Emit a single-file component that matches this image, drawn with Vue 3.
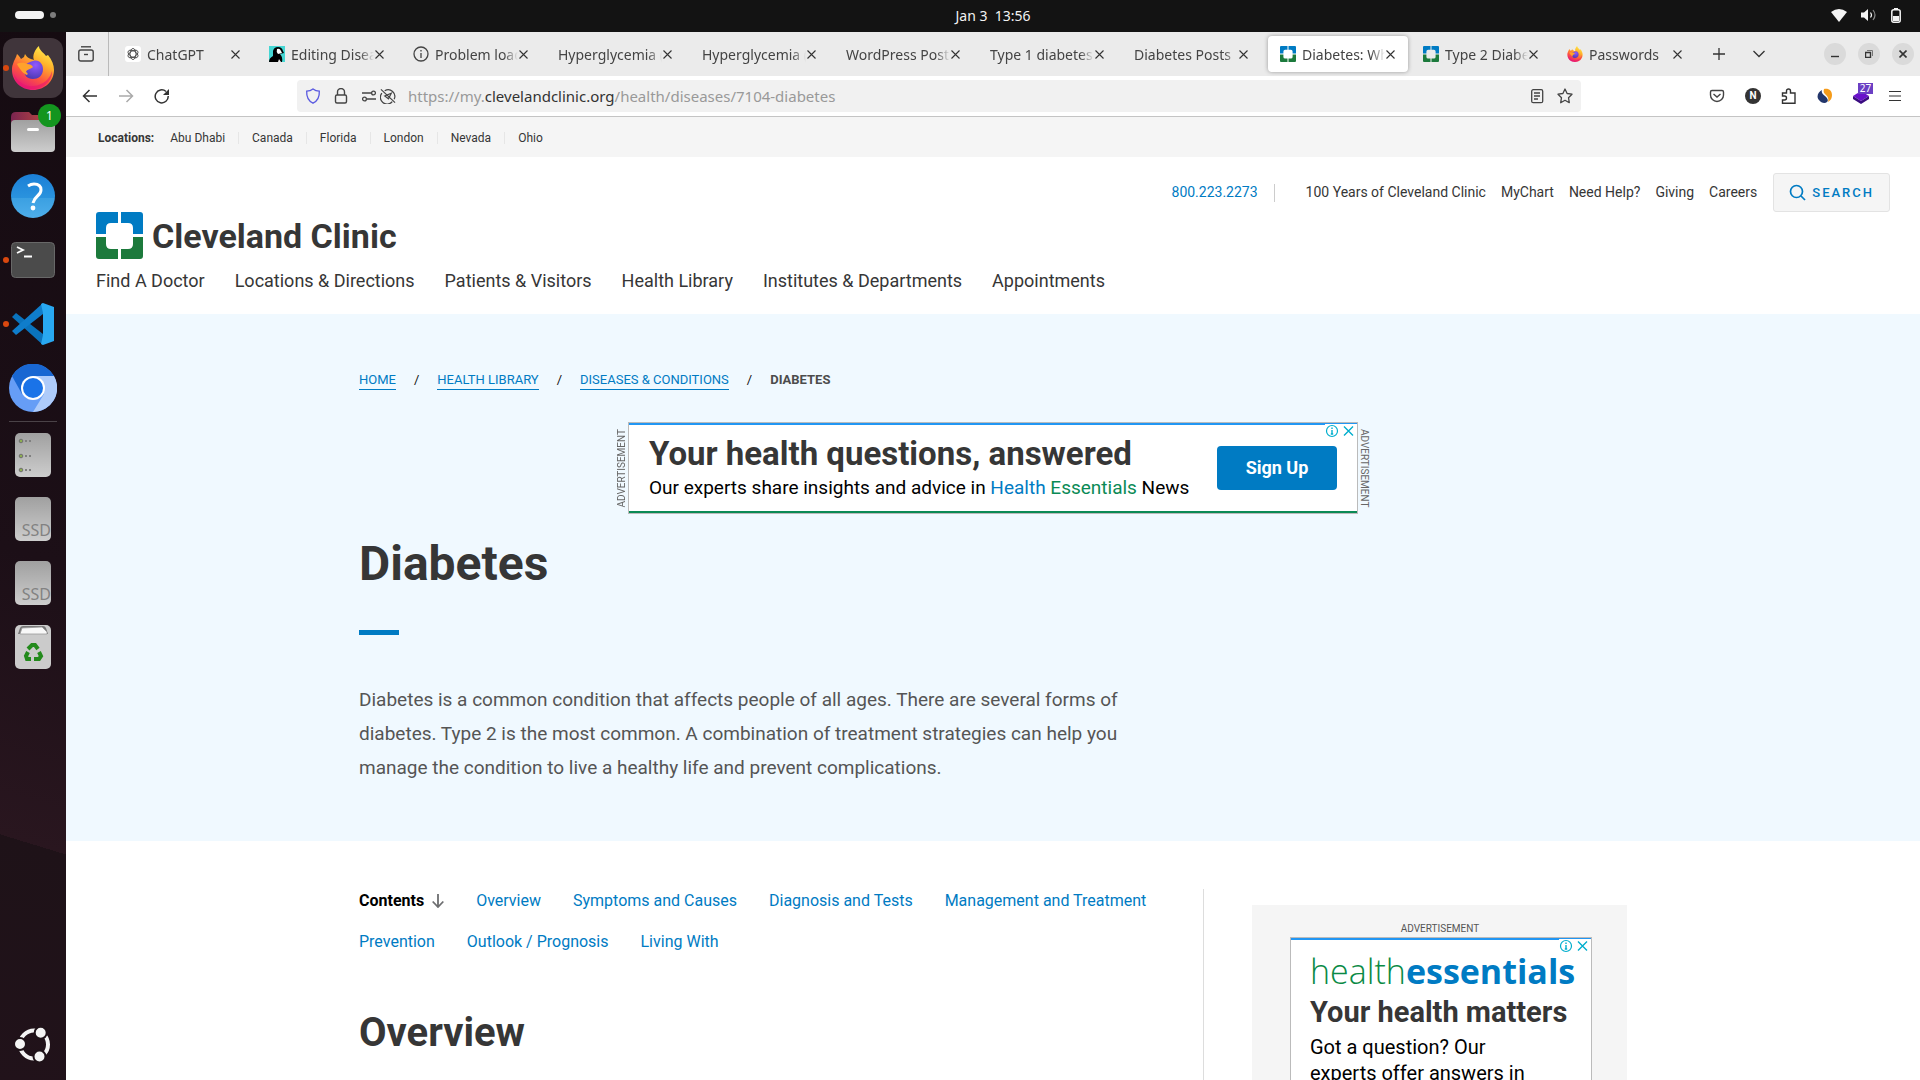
<script setup>
const tabs = [
  { title: 'ChatGPT', icon: 'gpt' },
  { title: 'Editing Disea', icon: 'bird' },
  { title: 'Problem load', icon: 'info' },
  { title: 'Hyperglycemia (' },
  { title: 'Hyperglycemia (' },
  { title: 'WordPress Post' },
  { title: 'Type 1 diabetes' },
  { title: 'Diabetes Posts' },
  { title: 'Diabetes: Wh', icon: 'clinic', active: true },
  { title: 'Type 2 Diabe', icon: 'clinic' },
  { title: 'Passwords', icon: 'fox' },
]
const locations = ['Abu Dhabi', 'Canada', 'Florida', 'London', 'Nevada', 'Ohio']
const utility = ['100 Years of Cleveland Clinic', 'MyChart', 'Need Help?', 'Giving', 'Careers']
const mainNav = ['Find A Doctor', 'Locations & Directions', 'Patients & Visitors', 'Health Library', 'Institutes & Departments', 'Appointments']
const crumbs = ['HOME', 'HEALTH LIBRARY', 'DISEASES & CONDITIONS']
const contents = ['Overview', 'Symptoms and Causes', 'Diagnosis and Tests', 'Management and Treatment', 'Prevention', 'Outlook / Prognosis', 'Living With']
</script>

<template>
  <div class="desktop">
    <svg width="0" height="0" class="defs" aria-hidden="true">
      <defs>
        <linearGradient id="foxBody" x1="0.8" y1="0" x2="0.3" y2="1">
          <stop offset="0" stop-color="#fff44f" />
          <stop offset="0.35" stop-color="#ffb12b" />
          <stop offset="0.65" stop-color="#ff5a3c" />
          <stop offset="1" stop-color="#e3127f" />
        </linearGradient>
        <radialGradient id="foxGlobe" cx="0.6" cy="0.25" r="0.8">
          <stop offset="0" stop-color="#9059ff" />
          <stop offset="1" stop-color="#4a38b0" />
        </radialGradient>
        <linearGradient id="metal" x1="0" y1="0" x2="0" y2="1">
          <stop offset="0" stop-color="#a0a0a0" />
          <stop offset="1" stop-color="#cdcdcd" />
        </linearGradient>
        <linearGradient id="folderBack" x1="0" y1="0" x2="1" y2="0">
          <stop offset="0" stop-color="#7b2450" />
          <stop offset="1" stop-color="#c8503c" />
        </linearGradient>
        <linearGradient id="helpBlue" x1="0" y1="0" x2="0" y2="1">
          <stop offset="0" stop-color="#1b7fd6" />
          <stop offset="0.54" stop-color="#2a93de" />
          <stop offset="0.55" stop-color="#3ba0e2" />
          <stop offset="1" stop-color="#4eaeea" />
        </linearGradient>
      </defs>
      <symbol id="fox" viewBox="0 0 42 44">
        <path d="M1 18C2 14 4 12 5 8c2 2 3 3 4 5l3-2 1-3c2 4 6 5 9 6C20 10 23 3 27 0c0 4 4 6 7 10l2-1c4 5 6 10 6 15 0 11-9 20-21 20S0 35 0 24c0-2 0-4 1-6z" fill="url(#foxBody)" />
        <path d="M2 28c4 9 12 13 20 12 9-1 16-7 18-15 1 8-7 18-19 18C10 43 3 37 2 28z" fill="#e9146f" opacity=".6" />
        <path d="M21 15c6-2 10 3 10 8 0 7-5 10-10 10-6 0-9-4-9-9s4-8 9-9z" fill="url(#foxGlobe)" />
        <path d="M5 18c4-2 8-1 10 0 3 0 5 1 6 3-2 2-6 2-7 5 2 1 2 2 1 3-3-1-7-5-10-11z" fill="#ffa22c" />
      </symbol>
      <symbol id="clinic" viewBox="0 0 47 47">
        <path d="M3 0h19v11h-7q-5 0-5 5v6H0V3q0-3 3-3zM44 0H25v11h7q5 0 5 5v6h10V3q0-3-3-3z" fill="#007bc3" />
        <path d="M3 47h19V37h-7q-5 0-5-5v-7H0v19q0 3 3 3zM44 47H25V37h7q5 0 5-5v-7h10v19q0 3-3 3z" fill="#1c7a3c" />
      </symbol>
      <symbol id="adchoice" viewBox="0 0 32 14">
        <circle cx="7" cy="7" r="5.500" fill="none" stroke="#00aecd" stroke-width="1.200" />
        <path d="M7 6v4M7 3.500v1.400M5.800 10h2.400" stroke="#00aecd" stroke-width="1.400" />
        <path d="M19 2.500l9 9M28 2.500l-9 9" stroke="#00aecd" stroke-width="1.400" />
      </symbol>
    </svg>

    <header class="panel">
      <div class="workspaces"><span class="pill"></span><span class="dot"></span></div>
      <time class="clock">Jan 3&nbsp; 13:56</time>
      <div class="status">
        <svg width="16" height="13" viewBox="0 0 16 13"><path d="M8 13L0 3Q8-3 16 3z" fill="#f4f4f4" /></svg>
        <svg width="16" height="14" viewBox="0 0 16 14"><path d="M0 4.500h3L7 1v12L3 9.500H0z" fill="#f4f4f4" /><path d="M9.500 4.500q2 2.500 0 5" stroke="#f4f4f4" stroke-width="1.200" fill="none" /><path d="M12 2q4 5 0 10" stroke="#888" stroke-width="1.200" fill="none" /></svg>
        <svg width="10" height="15" viewBox="0 0 10 15"><path d="M3 0h4v2H3z" fill="#f4f4f4" /><rect x=".8" y="1.800" width="8.400" height="12.400" rx="2" fill="none" stroke="#f4f4f4" stroke-width="1.500" /><path d="M2 8h6v5H2z" fill="#f4f4f4" /></svg>
      </div>
    </header>

    <div class="workarea">
      <nav class="dock" aria-label="Dock">
        <button class="app focused" aria-label="Firefox"><i class="run"></i><svg width="42" height="44"><use href="#fox" /></svg></button>
        <button class="app" aria-label="Files">
          <svg width="46" height="42" viewBox="0 0 46 42"><path d="M1 6q0-5 5-5h13l3 3h18q5 0 5 5v20H1z" fill="url(#folderBack)" /><rect x="1" y="9" width="44" height="32" rx="4" fill="url(#metal)" /><rect x="17" y="17" width="12" height="3" rx="1.500" fill="#fff" /></svg>
          <span class="count">1</span>
        </button>
        <button class="app" aria-label="Help"><svg width="44" height="44" viewBox="0 0 44 44"><circle cx="22" cy="22" r="22" fill="url(#helpBlue)" /><path d="M17 12q3-2 6-2 7 0 7 6 0 3-3.500 6T22 29" stroke="#fff" stroke-width="3" fill="none" /><circle cx="22" cy="34" r="2.400" fill="#fff" /></svg></button>
        <button class="app" aria-label="Terminal"><i class="run"></i><svg width="44" height="36" viewBox="0 0 44 36"><rect x=".5" y=".5" width="43" height="35" rx="4" fill="#4b4b4b" stroke="#686868" /><path d="M6 5l6 3-6 3M13 14.500h8" stroke="#fff" stroke-width="1.800" fill="none" /></svg></button>
        <button class="app" aria-label="Visual Studio Code"><i class="run"></i><svg width="42" height="42" viewBox="0 0 42 42"><path d="M0 14l4-4 27 21v11z" fill="#0a73bd" /><path d="M0 28l4 4 27-21V0z" fill="#0f7dcb" /><path d="M31 0l11 4v34l-11 4-2-1 2-9V10l-2-9z" fill="#29a8f1" /></svg></button>
        <button class="app" aria-label="Chromium"><svg width="48" height="48" viewBox="0 0 48 48"><circle cx="24" cy="24" r="24" fill="#669df6" /><path d="M3 12A24 24 0 0 1 45 12H24L13 30z" fill="#1967d2" /><path d="M24 12h21a24 24 0 0 1-21 36l11-18z" fill="#aecbfa" /><circle cx="24" cy="24" r="12" fill="#fff" /><circle cx="24" cy="24" r="10" fill="#1a73e8" /></svg></button>
        <hr />
        <button class="app" aria-label="Drive"><svg width="38" height="46" viewBox="0 0 38 46"><rect x="1" y="1" width="36" height="44" rx="5" fill="url(#metal)" /><g fill="#8dae50" stroke="#707070"><circle cx="7" cy="9" r="1.800" /><circle cx="7" cy="24" r="1.800" /><circle cx="7" cy="38" r="1.800" /></g><path d="M11 9h6M11 24h6M11 38h6" stroke="#808080" stroke-width="2" stroke-dasharray="2 2" /></svg></button>
        <button v-for="n in 2" :key="n" class="app"><span class="ssd">SSD</span></button>
        <button class="app" aria-label="Trash"><svg width="38" height="46" viewBox="0 0 38 46"><rect x="1" y="1" width="36" height="44" rx="5" fill="#cbcbcb" /><path d="M4 10l2-6q1-2 3-2h20q2 0 3 2l2 6z" fill="#777" /><path d="M6 10l2-6 20-1 5 5v2z" fill="#f8f8f8" stroke="#999" stroke-width=".8" /><g fill="none" stroke="#238a1c" stroke-width="4"><path d="M14 25l4-4h3l3 4" /><path d="M25 28l2 4-2 3h-5" /><path d="M17 35h-4l-1-3 2-4" /></g></svg></button>
        <button class="apps-button" aria-label="Show Apps"><svg width="36" height="36" viewBox="0 0 36 36"><circle cx="19" cy="17.500" r="14" fill="none" stroke="#f4f4f4" stroke-width="4" /><g fill="#f4f4f4" stroke="#1e1218" stroke-width="2"><circle cx="5" cy="17" r="6" /><circle cx="25.700" cy="5.700" r="6" /><circle cx="24.500" cy="29.500" r="6" /></g></svg></button>
      </nav>

      <section class="browser">
        <div class="tabbar">
          <button class="view" aria-label="Firefox View"><svg width="16" height="16" viewBox="0 0 16 16" fill="none" stroke="#444" stroke-width="1.400"><path d="M3 .8h10" /><rect x=".8" y="4" width="14.400" height="11" rx="2" /><path d="M6 8.500h4" /></svg></button>
          <div v-for="(t, i) in tabs" :key="i" class="tab" :class="{ active: t.active }">
            <svg v-if="t.icon === 'gpt'" width="16" height="16" viewBox="0 0 16 16"><rect width="16" height="16" rx="3" fill="#fff" /><g fill="none" stroke="#333" stroke-width=".8"><ellipse cx="8" cy="8" rx="3" ry="5.500" /><ellipse cx="8" cy="8" rx="3" ry="5.500" transform="rotate(60 8 8)" /><ellipse cx="8" cy="8" rx="3" ry="5.500" transform="rotate(120 8 8)" /></g></svg>
            <svg v-else-if="t.icon === 'bird'" width="16" height="16" viewBox="0 0 16 16"><rect width="16" height="16" fill="#45d6d3" /><path d="M4 5q1-4 5-4 4 0 5 4l1 2-4 1q3 3 2 8H0q0-4 4-6z" fill="#000" /><path d="M8 3q3-1 4 2l1 2-4 1q-2-2-1-5z" fill="#fff" /><path d="M10 13l2 3h-3z" fill="#eee" /></svg>
            <svg v-else-if="t.icon === 'info'" width="16" height="16" viewBox="0 0 16 16" stroke="#444" stroke-width="1.300" fill="none"><circle cx="8" cy="8" r="7" /><path d="M8 7v5M8 4v1.500" /></svg>
            <svg v-else-if="t.icon" width="16" height="16"><use :href="'#' + t.icon" /></svg>
            <span class="title">{{ t.title }}</span>
            <button class="close" aria-label="Close tab"><svg width="9" height="9" viewBox="0 0 9 9"><path d="M.5.5l8 8M8.500.5l-8 8" stroke="#333" stroke-width="1.100" /></svg></button>
          </div>
          <button class="tool" aria-label="New tab"><svg width="12" height="12" viewBox="0 0 12 12"><path d="M6 0v12M0 6h12" stroke="#333" stroke-width="1.300" /></svg></button>
          <button class="tool" aria-label="List all tabs"><svg width="12" height="8" viewBox="0 0 12 8"><path d="M.5 1L6 6.500 11.500 1" stroke="#333" stroke-width="1.300" fill="none" /></svg></button>
          <div class="window-controls">
            <button aria-label="Minimize"><svg width="8" height="8"><path d="M0 6.500h8" stroke="#333" stroke-width="1.400" /></svg></button>
            <button aria-label="Restore"><svg width="8" height="8" viewBox="0 0 8 8" fill="none" stroke="#333"><path d="M.5 2.500h5v5h-5z" stroke-width="1.400" /><path d="M2 .5h5.500V6" stroke="#777" /></svg></button>
            <button aria-label="Close"><svg width="8" height="8" viewBox="0 0 8 8"><path d="M.5.5l7 7M7.500.5l-7 7" stroke="#333" stroke-width="1.600" /></svg></button>
          </div>
        </div>

        <div class="navbar">
          <div class="history">
            <button aria-label="Back"><svg width="16" height="14" viewBox="0 0 16 14" fill="none" stroke="#333" stroke-width="1.500"><path d="M15 7H2M7.500 1L1.500 7l6 6" /></svg></button>
            <button aria-label="Forward"><svg width="16" height="14" viewBox="0 0 16 14" fill="none" stroke="#aaa" stroke-width="1.500"><path d="M1 7h13M8.500 1l6 6-6 6" /></svg></button>
            <button aria-label="Reload"><svg width="16" height="16" viewBox="0 0 16 16"><path d="M14.200 8A6.500 6.500 0 1 1 12 3.500" fill="none" stroke="#333" stroke-width="1.500" /><path d="M15 1v6H9z" fill="#333" /></svg></button>
          </div>
          <div class="urlbar">
            <svg width="16" height="16" viewBox="0 0 16 16"><path d="M8 .9c2 1.600 4 2.200 6.300 2.300.3 5-1 9.300-6.300 12C2.700 12.500 1.400 8.200 1.700 3.200 4 3.100 6 2.500 8 .9z" fill="none" stroke="#5a5ae0" stroke-width="1.300" /></svg>
            <svg width="16" height="16" viewBox="0 0 16 16" fill="none" stroke="#444" stroke-width="1.400"><rect x="2.500" y="7" width="11" height="8" rx="1.500" /><path d="M4.500 7V4a3.500 3.500 0 0 1 7 0v3" /></svg>
            <div class="pair">
              <svg width="16" height="16" viewBox="0 0 16 16" fill="none" stroke="#444" stroke-width="1.300"><path d="M1 5h9M6 11h9" /><circle cx="12.500" cy="5" r="1.900" /><circle cx="3.500" cy="11" r="1.900" /></svg>
              <svg width="16" height="16" viewBox="0 0 17 16" fill="none" stroke="#444" stroke-width="1.300"><path d="M5 2.500a7 7 0 0 1 10 9M13 14A7 7 0 0 1 2 5M1 1l15 14" /><path d="M5 8l7-3-3 6z" /></svg>
            </div>
            <div class="url">https://my.<b>clevelandclinic.org</b>/health/diseases/7104-diabetes</div>
            <svg width="16" height="16" viewBox="0 0 16 16" fill="none" stroke="#444" stroke-width="1.300"><rect x="2.700" y="1.700" width="11" height="13" rx="1.500" /><path d="M5 5h6M5 8h6M5 11h4" /></svg>
            <svg width="16" height="16" viewBox="0 0 16 16" fill="none" stroke="#444" stroke-width="1.300" stroke-linejoin="round"><path d="M8 1l2.100 4.500 4.900.7-3.500 3.500.8 5L8 12.300l-4.300 2.400.8-5L1 6.200l4.900-.7z" /></svg>
          </div>
          <div class="extensions">
            <svg width="16" height="16" viewBox="0 0 16 16" fill="none" stroke="#444" stroke-width="1.400"><path d="M1.500 4q0-1.500 1.500-1.500h10q1.500 0 1.500 1.500v3a6.500 6.500 0 0 1-13 0zM4.500 6L8 9l3.500-3" /></svg>
            <span class="ext-n">N</span>
            <svg width="16" height="16" viewBox="0 0 16 16" fill="none" stroke="#333" stroke-width="1.400"><path d="M1.500 15.200V12h2a1.500 1.500 0 0 0 0-4h-2V5h4V3a2 2 0 0 1 4 0v2h4.500v10.200z" /></svg>
            <svg width="16" height="16" viewBox="0 0 16 16"><path d="M5 2C1 4-1 9 2 12c2 3 6 4 8 2s0-4-2-6S4 5 5 2z" fill="#23366b" /><path d="M7 1c5-1 8 2 8 6 0 3-1 5-4 7 1-3 0-5-2-7S6 4 7 1z" fill="#f59b1a" /></svg>
            <span class="stack"><svg width="16" height="16" viewBox="0 0 16 16"><path d="M0 8l8-5 8 5-8 5z" fill="#6a11cb" /><path d="M0 8v3l8 5 8-5V8l-8 5z" fill="#3a0b80" /></svg><span class="stack-count">27</span></span>
            <button aria-label="Menu"><svg width="12" height="12" viewBox="0 0 12 12"><path d="M0 1.500h12M0 6h12M0 10.500h12" stroke="#333" stroke-width="1.200" /></svg></button>
          </div>
        </div>

        <main class="page">
          <div class="locations">
            <strong>Locations:</strong>
            <ul><li v-for="l in locations" :key="l"><a href="#">{{ l }}</a></li></ul>
          </div>

          <header class="site-header">
            <div class="utility">
              <a href="#" class="phone">800.223.2273</a>
              <a v-for="u in utility" :key="u" href="#">{{ u }}</a>
              <button class="search"><svg width="17" height="17" viewBox="0 0 17 17" fill="none" stroke="#007bc3" stroke-width="1.700"><circle cx="7.500" cy="7.500" r="6" /><path d="M12 12l4 4" /></svg>SEARCH</button>
            </div>
            <a href="#" class="brand"><svg width="47" height="47"><use href="#clinic" /></svg><span>Cleveland Clinic</span></a>
            <nav class="main-nav"><a v-for="m in mainNav" :key="m" href="#">{{ m }}</a></nav>
          </header>

          <section class="hero">
            <div class="container">
              <nav class="crumbs">
                <template v-for="c in crumbs" :key="c"><a href="#">{{ c }}</a><span>/</span></template>
                <strong>DIABETES</strong>
              </nav>
              <div class="banner">
                <span class="side-label up">ADVERTISEMENT</span>
                <div class="ad wide">
                  <svg class="choice" width="32" height="14"><use href="#adchoice" /></svg>
                  <div>
                    <p class="ad-title">Your health questions, answered</p>
                    <p class="ad-sub">Our experts share insights and advice in <span class="blue">Health</span> <span class="green">Essentials</span> News</p>
                  </div>
                  <button class="signup">Sign Up</button>
                </div>
                <span class="side-label">ADVERTISEMENT</span>
              </div>
              <h1>Diabetes</h1>
              <div class="rule"></div>
              <p class="intro">Diabetes is a common condition that affects people of all ages. There are several forms of diabetes. Type 2 is the most common. A combination of treatment strategies can help you manage the condition to live a healthy life and prevent complications.</p>
            </div>
          </section>

          <div class="container body">
            <article>
              <nav class="contents">
                <strong>Contents <svg width="12" height="14" viewBox="0 0 12 14" fill="none" stroke="#6d6e70" stroke-width="1.800"><path d="M6 0v13M.7 7.500L6 13l5.300-5.500" /></svg></strong>
                <a v-for="c in contents" :key="c" href="#">{{ c }}</a>
              </nav>
              <h2>Overview</h2>
            </article>
            <aside>
              <div class="ad-panel">
                <span class="ad-label">ADVERTISEMENT</span>
                <div class="ad square">
                  <svg class="choice" width="32" height="14"><use href="#adchoice" /></svg>
                  <p class="he"><span>health</span><b>essentials</b></p>
                  <p class="square-title">Your health matters</p>
                  <p class="square-text">Got a question? Our experts offer answers in</p>
                </div>
              </div>
            </aside>
          </div>
        </main>
      </section>
    </div>
  </div>
</template>

<style>
body { margin: 0; overflow: hidden; }
</style>

<style scoped>
* { box-sizing: border-box; }
p, h1, h2, ul { margin: 0; padding: 0; }
a { color: inherit; text-decoration: none; }
button { border: 0; padding: 0; background: none; font: inherit; color: inherit; display: flex; align-items: center; justify-content: center; }
svg { flex: none; display: block; }
.defs { position: absolute; }
.desktop { height: 100vh; display: flex; flex-direction: column; overflow: hidden; font-family: Roboto, "Liberation Sans", sans-serif; color: #363636; background: #131313; }

.panel { flex: none; height: 32px; background: #131313; color: #f2f2f2; display: grid; grid-template-columns: 1fr auto 1fr; align-items: center; padding: 0 19px 2px 15px; font-family: "Noto Sans", sans-serif; font-size: 14px; }
.workspaces { display: flex; align-items: center; gap: 6px; }
.pill { width: 29px; height: 8px; border-radius: 4px; background: #f4f4f4; }
.dot { width: 6px; height: 6px; border-radius: 3px; background: #7d7d7d; }
.clock { padding-left: 70px; }
.status { display: flex; justify-content: flex-end; align-items: center; gap: 14px; }

.workarea { flex: 1; min-height: 0; display: flex; }
.dock { width: 66px; flex: none; display: flex; flex-direction: column; align-items: center; padding: 4px 0 17px; background: linear-gradient(197deg, #150b11 0%, #1c0f17 50%, #29161f 77%, #1e1218 77%, #21121a 100%); }
.dock hr { width: 48px; height: 1px; border: 0; margin: 1px 0; background: #4a4247; }
.app { position: relative; width: 60px; height: 60px; margin: 2px 0; border-radius: 12px; flex: none; }
.focused { background: #40353b; }
.run { position: absolute; left: 0; top: 27px; width: 6px; height: 6px; border-radius: 3px; background: #d9480f; }
.count { position: absolute; left: 35px; top: 2px; width: 23px; height: 23px; border-radius: 12px; background: #14951f; color: #fff; font: 12px/23px "Noto Sans", sans-serif; text-align: center; }
.ssd { width: 36px; height: 44px; border-radius: 5px; background: linear-gradient(#a0a0a0, #cdcdcd); color: #828282; font: 16px/18px "Noto Sans", sans-serif; display: flex; align-items: flex-end; justify-content: flex-end; padding-bottom: 2px; }
.apps-button { margin-top: auto; }

.browser { flex: 1; min-width: 0; display: flex; flex-direction: column; background: #fff; }
.tabbar { height: 44px; flex: none; display: flex; background: #ebebeb; font: 14px/20px "Noto Sans", sans-serif; color: #444; padding-right: 6px; }
.view { width: 43px; border-right: 1px solid #bababa; margin-right: 4px; padding-right: 2px; }
.tab { width: 144px; min-width: 0; display: flex; align-items: center; padding: 0 17px 0 12px; gap: 5px; }
.active { width: 140px; margin: 4px 3px; padding: 0 13px 0 12px; border-radius: 4px; background: #fff; box-shadow: 0 0 4px #999; }
.title { flex: 1; min-width: 0; overflow: hidden; white-space: nowrap; padding: 1px 0 0 1px; mask-image: linear-gradient(90deg, #000 calc(100% - 14px), transparent); }
.close { width: 9px; margin-left: -4px; }
.tool { width: 40px; }
.window-controls { margin-left: auto; display: flex; align-items: center; gap: 12px; }
.window-controls button { width: 22px; height: 22px; border-radius: 11px; background: #dadada; }

.navbar { height: 41px; flex: none; border-bottom: 1px solid #c4c4c4; display: flex; align-items: center; padding: 0 19px 0 16px; }
.history { width: 215px; flex: none; display: flex; gap: 20px; }
.urlbar { flex: 1; height: 32px; max-width: 1284px; border-radius: 4px; background: #f1f1f1; display: flex; align-items: center; gap: 12px; padding: 0 8px; }
.pair { display: flex; gap: 3px; }
.url { flex: 1; font: 15px/20px "Noto Sans", sans-serif; color: #999; }
.url b { font-weight: 400; color: #333; }
.extensions { margin-left: auto; display: flex; align-items: center; gap: 20px; }
.ext-n { width: 16px; height: 16px; border-radius: 8px; background: #333; color: #fff; font-size: 10px; line-height: 16px; font-weight: 700; text-align: center; }
.stack { position: relative; }
.stack-count { position: absolute; left: 5px; top: -5px; width: 15px; background: #6b3fc4; color: #fff; font: 10px/11px "Noto Sans", sans-serif; text-align: center; }

.page { flex: 1; min-height: 0; overflow: hidden; }
.locations { height: 40px; padding: 2px 32px 0; display: flex; align-items: center; background: #f5f5f5; font-size: 12px; line-height: 16px; }
.locations ul { display: flex; list-style: none; padding-left: 16px; }
.locations li { padding-right: 13px; margin-right: 13px; border-right: 1px solid #e6e6e6; line-height: 12px; }
.locations li:last-child { border: 0; }

.site-header { padding: 16px 30px 21px; }
.utility { display: flex; justify-content: flex-end; align-items: center; gap: 15px; font-size: 14px; line-height: 16px; }
.utility a { padding-bottom: 2px; }
.utility .phone { color: #007bc3; border-right: 1px solid #ccc; padding-right: 16px; margin-right: 16px; }
.search { height: 39px; padding: 0 15px; margin-left: 1px; gap: 6px; border: 1px solid #e3e3e3; border-radius: 3px; background: #f5f5f5; color: #007bc3; font-size: 13px; font-weight: 500; letter-spacing: 2px; }
.brand { display: flex; align-items: center; gap: 9px; font-size: 34px; line-height: 45px; font-weight: 700; }
.brand span { padding-top: 2px; }
.main-nav { display: flex; gap: 30px; padding-top: 10px; font-size: 18px; line-height: 24px; }

.container { width: 100%; max-width: 1268px; margin: 0 auto; }
.hero { background: #f0f9ff; padding: 57px 0 56px; }
.crumbs { display: flex; gap: 18px; font-size: 13px; line-height: 18px; }
.crumbs a { color: #007bc3; border-bottom: 1px solid #007bc3; }
.crumbs span { color: #111; }
.crumbs strong { color: #4c4c4c; }
.banner { display: flex; justify-content: center; align-items: center; padding-top: 32px; }
.side-label { writing-mode: vertical-rl; font-size: 10px; line-height: 12px; color: #666; }
.up { transform: rotate(180deg); }
.ad { position: relative; border: 1px solid #bbb; background: #fff; color: #000; }
.choice { position: absolute; right: 0; top: 1px; background: #fff; }
.wide { width: 730px; height: 92px; display: flex; justify-content: space-between; padding: 11px 20px; box-shadow: inset 0 2px #2196f3, inset 0 -2px #0a8a55; }
.ad-title { font-size: 33px; line-height: 40px; font-weight: 700; color: #363636; }
.ad-sub { font-size: 19px; line-height: 28px; }
.blue { color: #007bc3; }
.green { color: #0a8a55; }
.signup { width: 120px; height: 44px; margin-top: 12px; padding-bottom: 2px; border-radius: 4px; background: #007bc3; color: #fff; font-size: 18px; font-weight: 700; }
h1 { font-size: 48px; line-height: 60px; padding-top: 20px; }
.rule { width: 40px; height: 5px; margin: 36px 0 48px; background: #007bc3; }
.intro { max-width: 790px; font-size: 19px; line-height: 34px; color: #555; }

.body { display: flex; justify-content: space-between; padding-top: 48px; }
article { flex: 1; max-width: 844px; }
.contents { display: flex; flex-wrap: wrap; column-gap: 32px; row-gap: 17px; font-size: 16px; line-height: 24px; }
.contents a { color: #007bc3; }
.contents strong { display: flex; align-items: center; gap: 8px; color: #000; }
h2 { font-size: 40px; line-height: 48px; padding-top: 55px; }
aside { border-left: 1px solid #ddd; padding: 16px 0 0 48px; min-height: 320px; }
.ad-panel { width: 375px; padding: 16px 35px 0 38px; background: #f5f5f5; }
.ad-label { display: block; text-align: center; padding-right: 2px; font-size: 10px; line-height: 16px; color: #555; }
.square { height: 252px; padding: 9px 19px; box-shadow: inset 0 2px #2196f3; }
.he { font: 34px/48px "Open Sans", sans-serif; }
.he span { color: #0a8a45; font-weight: 300; }
.he b { color: #007bc3; }
.square-title { font-size: 29px; line-height: 34px; font-weight: 700; color: #363636; }
.square-text { max-width: 240px; padding-top: 5px; font-size: 20px; line-height: 26px; }
</style>
